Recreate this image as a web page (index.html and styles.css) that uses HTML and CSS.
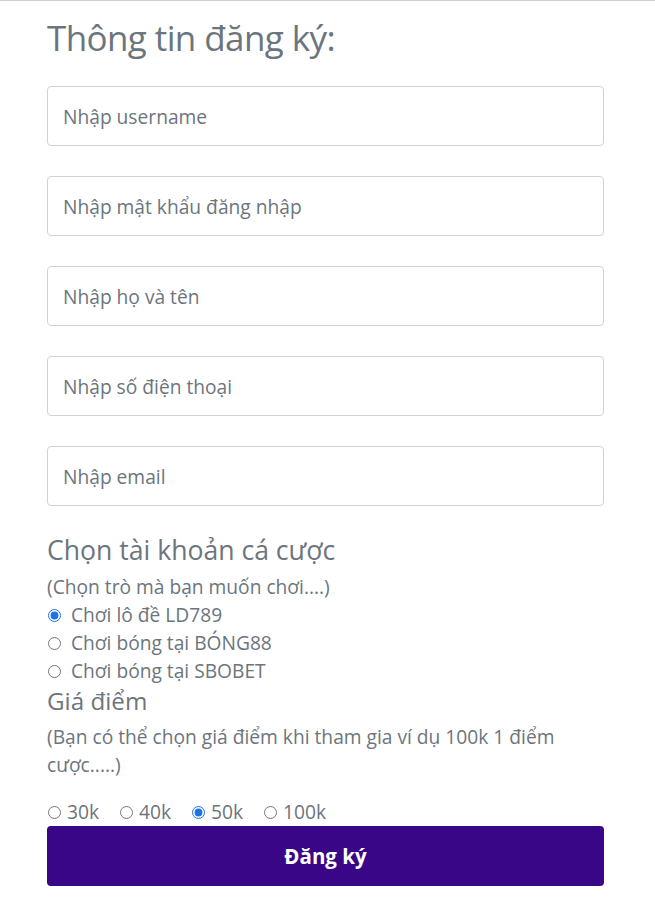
FILE: index.html
```html
<!DOCTYPE html>
<html lang="vi">
<head>
<meta charset="utf-8">
<link rel="stylesheet" href="styles.css">
</head>
<body>
<div class="topline"></div>
<form class="form">
  <h2 class="title">Thông tin đăng ký:</h2>
  <div class="fields">
    <input class="field" type="text" placeholder="Nhập username">
    <input class="field" type="text" placeholder="Nhập mật khẩu đăng nhập">
    <input class="field" type="text" placeholder="Nhập họ và tên">
    <input class="field" type="text" placeholder="Nhập số điện thoại">
    <input class="field" type="text" placeholder="Nhập email">
  </div>
  <h4 class="section">Chọn tài khoản cá cược</h4>
  <p class="hint">(Chọn trò mà bạn muốn chơi....)</p>
  <label class="opt"><input type="radio" name="acc" checked> Chơi lô đề LD789</label>
  <label class="opt"><input type="radio" name="acc"> Chơi bóng tại BÓNG88</label>
  <label class="opt"><input type="radio" name="acc"> Chơi bóng tại SBOBET</label>
  <h4 class="section section2">Giá điểm</h4>
  <p class="hint hint2">(Bạn có thể chọn giá điểm khi tham gia ví dụ 100k 1 điểm cược.....)</p>
  <div class="prices">
    <label class="price"><input type="radio" name="p"> 30k</label>
    <label class="price"><input type="radio" name="p"> 40k</label>
    <label class="price"><input type="radio" name="p" checked> 50k</label>
    <label class="price"><input type="radio" name="p"> 100k</label>
  </div>
  <button class="submit" type="button">Đăng ký</button>
</form>
</body>
</html>
```
FILE: styles.css
```css
html, body {
  margin: 0;
  padding: 0;
  background: #fff;
}
body {
  font-family: "Open Sans", "Noto Sans", sans-serif;
  color: #6c757d;
}
.topline {
  height: 1px;
  background: #cfcfcf;
}
.form {
  width: 557px;
  margin-left: 47px;
  display: flex;
  flex-direction: column;
}
.title {
  margin: 13px 0 0 0;
  font-size: 35px;
  font-weight: 400;
  letter-spacing: -0.6px;
  line-height: 48px;
  color: #6c757d;
}
.fields {
  display: flex;
  flex-direction: column;
  gap: 30px;
  margin-top: 24px;
}
.field {
  box-sizing: border-box;
  height: 60px;
  width: 100%;
  border: 1px solid #d2d2d2;
  border-radius: 4px;
  padding: 0 15px;
  font-family: "Open Sans", "Noto Sans", sans-serif;
  font-size: 19.2px;
  color: #495057;
  background: #fff;
  outline: none;
}
.field::placeholder {
  color: #6c757d;
  opacity: 1;
}
.section {
  margin: 28px 0 0 0;
  font-size: 26.6px;
  font-weight: 400;
  line-height: 32px;
  color: #6c757d;
}
.section2 {
  margin-top: 0;
  font-size: 24.2px;
}
.hint {
  margin: 7px 0 0 0;
  font-size: 19.2px;
  line-height: 28px;
  color: #6c757d;
}
.hint2 {
  margin-top: 6px;
  margin-bottom: 19px;
}
.opt, .price {
  display: flex;
  align-items: center;
  font-size: 19.2px;
  line-height: 28px;
  color: #6c757d;
}
.opt input, .price input {
  width: 13px;
  height: 13px;
  margin: 0 10px 0 1px;
  accent-color: #1a73e8;
}
.price input {
  margin-right: 6px;
}
.prices {
  display: flex;
  gap: 20px;
}
.submit {
  margin-top: 0;
  height: 60px;
  width: 100%;
  border: none;
  border-radius: 4px;
  background: #3a0688;
  color: #fff;
  font-family: "Open Sans", "Noto Sans", sans-serif;
  font-size: 20.5px;
  font-weight: 700;
}
```
